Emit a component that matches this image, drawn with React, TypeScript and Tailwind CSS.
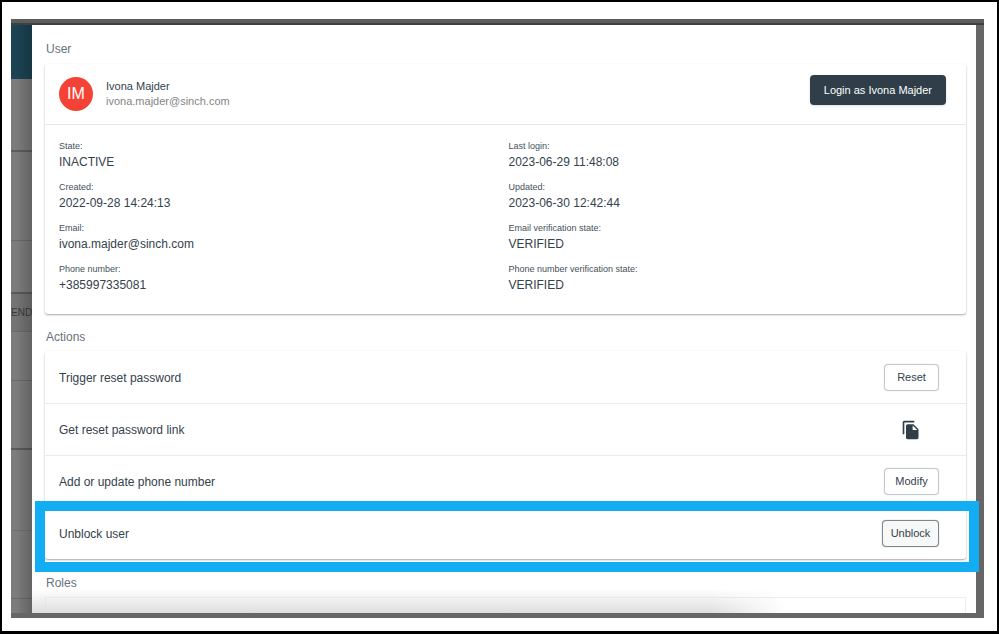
import type { ReactNode } from "react";

const details = [
  ["State:", "INACTIVE", "Last login:", "2023-06-29 11:48:08"],
  ["Created:", "2022-09-28 14:24:13", "Updated:", "2023-06-30 12:42:44"],
  ["Email:", "ivona.majder@sinch.com", "Email verification state:", "VERIFIED"],
  ["Phone number:", "+385997335081", "Phone number verification state:", "VERIFIED"],
];

const Field = ({ label, value }: { label: string; value: string }) => (
  <div className="h-[41px]">
    <dt className="text-[9px] leading-[14px] text-[#43515b]">{label}</dt>
    <dd className="text-xs leading-[18px]">{value}</dd>
  </div>
);

const Heading = ({ children }: { children: ReactNode }) => (
  <h2 className="text-xs leading-4 text-[#66737b] px-px">{children}</h2>
);

const OutlineButton = ({ children, active }: { children: ReactNode; active?: boolean }) => (
  <button
    type="button"
    className={
      active
        ? "h-[27px] w-[57px] rounded-[4px] border border-[#7d878d] bg-[#f7f8f8] text-[11px] shadow-[0_0_1px_#7d878d]"
        : "h-[27px] w-[55px] rounded-[4px] border border-[#c3c8cc] bg-white text-[11px] shadow-[0_0_1px_#c3c8cc]"
    }
  >
    {children}
  </button>
);

const ActionRow = ({ label, children }: { label: string; children: ReactNode }) => (
  <li className="relative h-[52px] pl-[14px] pr-[27px] flex items-center justify-between border-t border-[#ececec] first:border-transparent">
    <span className="text-xs">{label}</span>
    {children}
  </li>
);

const CopyIcon = () => (
  <svg viewBox="0 0 24 24" className="w-5 h-5" fill="#2f3e48">
    <path d="M16 1H4c-1.1 0-2 .9-2 2v14h2V3h12V1zm-1 4 6 6v10c0 1.1-.9 2-2 2H7.99C6.89 23 6 22.1 6 21l.01-14c0-1.1.89-2 1.99-2h7zm-1 7h5.500L14 6.500V12z" />
  </svg>
);

// Slice of the dimmed page that stays visible left of the dialog
const Backdrop = () => (
  <div className="relative w-[21px] shrink-0 overflow-hidden bg-[#7c7c7c] text-[#3a3a3a] flex flex-col">
    <div className="h-[54px] bg-[#1c4353]" />
    <div className="h-[73px] border-b-2 border-[#5e5e5e]" />
    <div className="h-[89px] border-b border-[#6a6a6a]" />
    <div className="h-[53px] border-b-2 border-[#5a5a5a]" />
    <div className="h-[38px] border-b border-[#6a6a6a] bg-[#747474] flex items-center text-[10px]">END</div>
    <div className="h-[49px] border-b border-[#6a6a6a]" />
    <div className="h-[69px] border-b-2 border-[#5a5a5a]" />
    <div className="h-[81px] border-b border-[#707070]" />
    <div className="h-[68px] border-b border-[#6a6a6a]" />
    <div className="absolute inset-y-0 right-0 w-4 bg-linear-to-r from-transparent to-black/20" />
  </div>
);

const App = () => (
  <div className="min-h-screen flex border-2 border-b-[3px] border-black bg-white pt-[17px] pl-[9px] pr-[13px] pb-[13px] text-[#33424c] font-['Liberation_Sans',Arial,sans-serif]">
    <div className="flex-1 flex flex-col bg-[#666666] pb-[5px]">
      <div className="h-[6px] bg-[#5b5c5c] border-b-2 border-[#3d3f41]" />
      <div className="flex-1 flex pr-2">
        <Backdrop />
        <main role="dialog" aria-label="User details" className="flex-1 flex flex-col bg-white pt-4 pl-[13px] pr-[10px]">
          <Heading>User</Heading>
          <section className="mt-[7px] rounded-[3px] shadow-[0_1px_2px_rgba(0,0,0,0.35)]">
            <header className="h-[61px] pl-[14px] pr-5 flex items-center border-b border-[#e6e6e6]">
              <span className="size-[34px] rounded-full bg-[#f44336] text-white text-base flex items-center justify-center">IM</span>
              <div className="ml-[13px] flex-1 text-[11px] leading-[15px]">
                <p>Ivona Majder</p>
                <p className="text-[#858585]">ivona.majder@sinch.com</p>
              </div>
              <button type="button" className="h-[30px] mb-2 px-[14px] rounded-[4px] bg-[#2f3e48] text-white text-[11px] shadow-sm">
                Login as Ivona Majder
              </button>
            </header>
            <dl className="grid grid-cols-2 pt-[14px] pb-[11px] pl-[14px] pr-2">
              {details.map(([a, b, c, d]) => (
                <div key={a} className="contents">
                  <Field label={a} value={b} />
                  <Field label={c} value={d} />
                </div>
              ))}
            </dl>
          </section>

          <div className="mt-[15px]">
            <Heading>Actions</Heading>
          </div>
          <ul className="mt-[6px] rounded-[3px] shadow-[0_1px_2px_rgba(0,0,0,0.35)]">
            <ActionRow label="Trigger reset password">
              <OutlineButton>Reset</OutlineButton>
            </ActionRow>
            <ActionRow label="Get reset password link">
              <button type="button" aria-label="Copy reset password link" className="mr-[18px]">
                <CopyIcon />
              </button>
            </ActionRow>
            <ActionRow label="Add or update phone number">
              <OutlineButton>Modify</OutlineButton>
            </ActionRow>
            <ActionRow label="Unblock user">
              <OutlineButton active>Unblock</OutlineButton>
              <div className="absolute -top-[7px] -bottom-[13px] -left-[10px] -right-[13px] border-10 border-[#12adf2] pointer-events-none" />
            </ActionRow>
          </ul>

          <div className="relative flex-1 flex flex-col -ml-[13px] pl-[13px] -mr-[10px] pr-[10px] pt-4 overflow-hidden">
            <div className="absolute bottom-0 left-0 w-4/5 h-6 bg-linear-to-t from-[#dedede] to-transparent mask-r-from-90%" />
            <Heading>Roles</Heading>
            <div className="flex-1 mt-[6px] border border-b-0 border-[#ededed]" />
          </div>
        </main>
      </div>
    </div>
  </div>
);

export default App;
